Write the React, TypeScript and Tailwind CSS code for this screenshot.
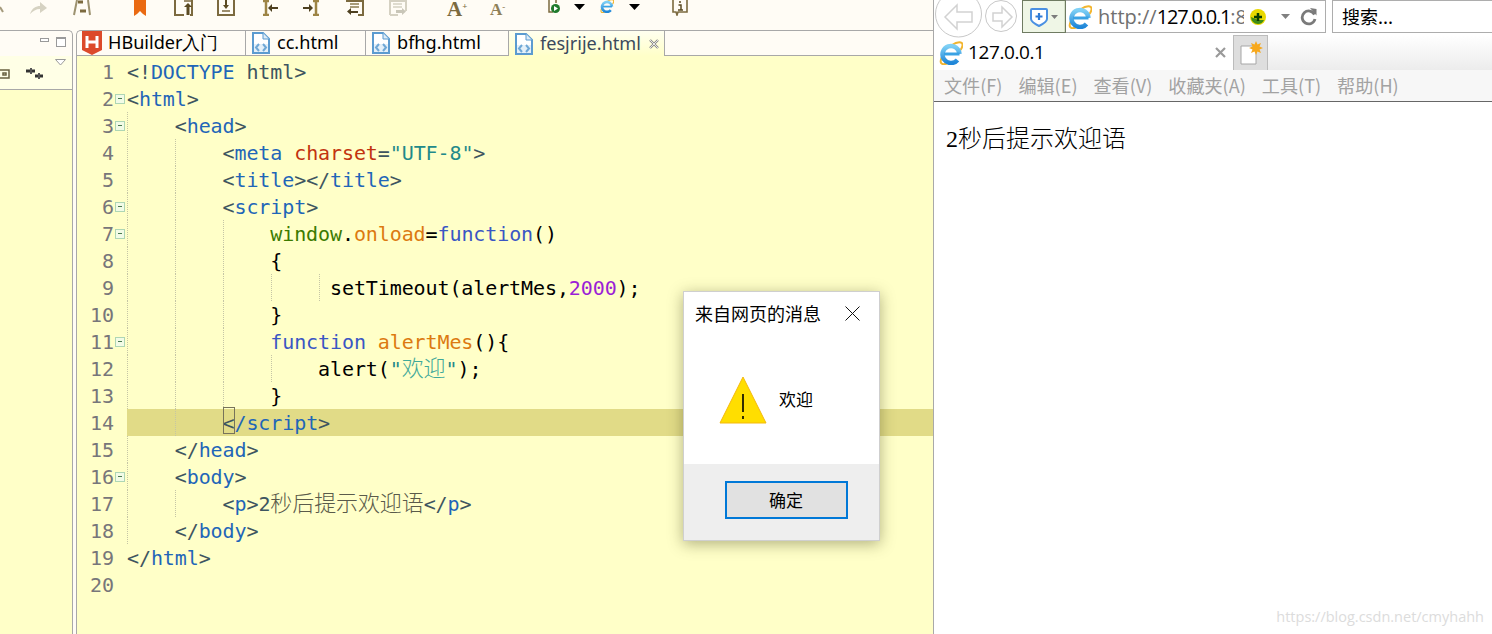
import type { ReactNode } from 'react';

const UI = '"Open Sans", "Noto Sans CJK SC", sans-serif';

function IeIcon({ size }: { size: number }) {
  return (
    <svg width={size} height={size} viewBox="0 0 24 24" className="shrink-0">
      <defs>
        <linearGradient id="ie-blue" x1="0" y1="0" x2="0" y2="1">
          <stop offset="0" stopColor="#7fd0f5" />
          <stop offset="1" stopColor="#1f86d8" />
        </linearGradient>
      </defs>
      <path d="M3 16C-.5 23 3.500 24.500 9 22" fill="none" stroke="#f2b52e" strokeWidth="2" />
      <path d="M13 4C18 .5 24 0 23.500 4.500 23.300 6 22.500 7.500 21.500 9" fill="none" stroke="#f2b52e" strokeWidth="2" />
      <path d="M20.500 13A8.500 8.500 0 1 0 18.500 19" fill="none" stroke="url(#ie-blue)" strokeWidth="4.500" />
      <path d="M5 13h15.500" stroke="#3aa2e4" strokeWidth="3" />
    </svg>
  );
}

function FileIcon() {
  return (
    <svg width="18" height="22" viewBox="0 0 18 22" className="shrink-0">
      <path d="M1 1h10l6 6v14H1z" fill="#fff" stroke="#5b9bd0" strokeWidth="2" />
      <path d="M11 1v6h6" fill="#dcebf7" stroke="#5b9bd0" />
      <path d="M2 12h14v8H2z" fill="#e4f0f9" />
      <path d="M7 12l-3 3.500L7 19M11 12l3 3.500L11 19" fill="none" stroke="#6fa8d6" strokeWidth="2" />
    </svg>
  );
}

function Tab({ icon, label, className }: { icon: ReactNode; label: string; className: string }) {
  return (
    <div className={`flex h-full items-center border-r border-b border-[#a8a8a8] text-[18.100px] text-black ${className}`}>
      {icon}
      <span>{label}</span>
    </div>
  );
}

function ToolBar() {
  const brown = '#7c6a3f';
  return (
    <div className="flex h-[30px] items-start bg-[#fffcf5]">
      <svg width="4" height="14" className="mt-[6px] shrink-0"><path d="M0 1l3 5" stroke="#a59a7c" strokeWidth="2" /></svg>
      <svg width="18" height="14" viewBox="0 0 18 14" className="ml-[26px] mt-[1px] shrink-0">
        <path d="M0 13C2 7 6 5 10 5V1l7 6-7 5V8C6 8 3 10 0 13z" fill="#d6d2c2" />
      </svg>
      <svg width="18" height="16" viewBox="0 0 18 16" className="ml-[25px] shrink-0">
        <path d="M4 0L1 15M15 0l2 15" stroke="#9d9270" strokeWidth="2" fill="none" />
        <path d="M5 2h5M7 11h6" stroke={brown} strokeWidth="3" />
      </svg>
      <svg width="12" height="16" viewBox="0 0 12 16" className="ml-[43px] shrink-0">
        <path d="M0 0h12v16l-3-2-3-3-3 3-3 2z" fill="#ea6a12" />
      </svg>
      <svg width="19" height="16" viewBox="0 0 19 16" className="ml-[28px] shrink-0">
        <path d="M1 0v15h9M18 0v15h-2" fill="none" stroke={brown} strokeWidth="2" />
        <path d="M14 3l-4 4h2.500v8h3V7H18z" fill="#5b4a22" />
        <path d="M10 1h7" stroke={brown} strokeWidth="1.500" />
      </svg>
      <svg width="18" height="16" viewBox="0 0 18 16" className="ml-[24px] shrink-0">
        <path d="M1 0v15h16V0" fill="none" stroke={brown} strokeWidth="2" />
        <path d="M6 5l3 4 3-4h-2V0H8v5z" fill="#5b4a22" />
        <path d="M5 11h8" stroke={brown} strokeWidth="1.500" />
      </svg>
      <svg width="16" height="16" viewBox="0 0 16 16" className="ml-[28px] shrink-0">
        <path d="M0 1h6M0 15h6M3 1v14" fill="none" stroke="#9d8445" strokeWidth="2.500" />
        <path d="M15 7H9V4L5 8l4 4V9h6z" fill="#4e4020" />
      </svg>
      <svg width="16" height="16" viewBox="0 0 16 16" className="ml-[24px] shrink-0">
        <path d="M10 1h6M10 15h6M13 1v14" fill="none" stroke="#9d8445" strokeWidth="2.500" />
        <path d="M0 7h6V4l4 4-4 4V9H0z" fill="#4e4020" />
      </svg>
      <svg width="18" height="16" viewBox="0 0 18 16" className="ml-[27px] shrink-0">
        <path d="M0 1h17v14h-5" fill="none" stroke={brown} strokeWidth="2" />
        <path d="M4 4h9M4 7h9" stroke="#8c7c52" strokeWidth="1.500" />
        <path d="M12 11H5V8l-4 3.500L5 15v-2h7z" fill="#4e4020" />
      </svg>
      <svg width="18" height="16" viewBox="0 0 18 16" className="ml-[25px] shrink-0">
        <path d="M1 15V1h16v10M1 15h8" fill="none" stroke="#d5d1c2" strokeWidth="2" />
        <path d="M4 4h9M4 7h9" stroke="#d5d1c2" strokeWidth="1.500" />
        <path d="M7 10h6V8l4 3.500L13 15v-2H7z" fill="#c9c6b8" />
      </svg>
      <div className="ml-[40px] flex w-[20px] shrink-0 items-start font-bold text-[#7c6a3f]" style={{ fontFamily: '"Liberation Serif", serif' }}>
        <span className="text-[21px] leading-[19px]">A</span>
        <span className="text-[9px] leading-[12px]">+</span>
      </div>
      <div className="ml-[23px] flex w-[15px] shrink-0 items-start font-bold text-[#8f8058]" style={{ fontFamily: '"Liberation Serif", serif' }}>
        <span className="text-[17px] leading-[19px]">A</span>
        <span className="text-[9px] leading-[14px]">-</span>
      </div>
      <svg width="12" height="14" viewBox="0 0 12 14" className="ml-[43px] shrink-0">
        <path d="M1 0v12h4M8 0v3" fill="none" stroke={brown} strokeWidth="1.500" />
        <circle cx="7.500" cy="8.500" r="4.500" fill="#1f7a2c" />
        <path d="M6 6l4 2.500L6 11z" fill="#fff" />
      </svg>
      <svg width="11" height="6" className="ml-[14px] mt-[4px] shrink-0"><path d="M0 0h11L5.500 6z" fill="#000" /></svg>
      <div className="ml-[15px] -mt-[1px] shrink-0"><IeIcon size={14} /></div>
      <svg width="11" height="6" className="ml-[15px] mt-[4px] shrink-0"><path d="M0 0h11L5.500 6z" fill="#000" /></svg>
      <svg width="16" height="16" viewBox="0 0 16 16" className="ml-[32px] shrink-0">
        <path d="M1 0v12h3l1 3 1-3h9V0" fill="none" stroke={brown} strokeWidth="1.600" />
        <path d="M7 2h2M6.500 5H9v5M6 10h5" fill="none" stroke="#5b4a22" strokeWidth="1.500" />
      </svg>
    </div>
  );
}

const dk = 'text-[#3e5560]';
const tag = 'text-[#1f66b8]';
const cjk = 'text-[22px] leading-none font-light';

type Line = { fold?: boolean; guides: string[]; hl?: boolean; code: ReactNode };

const g127 = 'left-0';
const g175 = 'left-[48px]';
const g223 = 'left-[96px]';
const g271 = 'left-[144px]';
const g319 = 'left-[192px]';

const lines: Line[] = [
  { guides: [], code: <><span className={dk}>{'<!'}</span><span className={tag}>DOCTYPE</span><span className={dk}> html{'>'}</span></> },
  { fold: true, guides: [], code: <><span className={dk}>{'<'}</span><span className={tag}>html</span><span className={dk}>{'>'}</span></> },
  { fold: true, guides: [g127], code: <>{'    '}<span className={dk}>{'<'}</span><span className={tag}>head</span><span className={dk}>{'>'}</span></> },
  { guides: [g127, g175], code: <>{'        '}<span className={dk}>{'<'}</span><span className={tag}>meta</span> <span className="text-[#c2330f]">charset</span><span className={dk}>=</span><span className="text-[#1f8a8a]">"UTF-8"</span><span className={dk}>{'>'}</span></> },
  { guides: [g127, g175], code: <>{'        '}<span className={dk}>{'<'}</span><span className={tag}>title</span><span className={dk}>{'></'}</span><span className={tag}>title</span><span className={dk}>{'>'}</span></> },
  { fold: true, guides: [g127, g175], code: <>{'        '}<span className={dk}>{'<'}</span><span className={tag}>script</span><span className={dk}>{'>'}</span></> },
  { fold: true, guides: [g127, g175, g223], code: <>{'            '}<span className="text-[#3b7a00]">window</span><span className="text-black">.</span><span className="text-[#dc7a10]">onload</span><span className="text-black">=</span><span className="text-[#3a56c4]">function</span><span className="text-black">()</span></> },
  { guides: [g127, g175, g223], code: <>{'            '}<span className="text-black">{'{'}</span></> },
  { guides: [g127, g175, g223, g271, g319], code: <>{'                 '}<span className="text-black">setTimeout(alertMes,</span><span className="text-[#9b1fd6]">2000</span><span className="text-black">);</span></> },
  { guides: [g127, g175, g223], code: <>{'            '}<span className="text-black">{'}'}</span></> },
  { fold: true, guides: [g127, g175, g223], code: <>{'            '}<span className="text-[#3a56c4]">function</span> <span className="text-[#dc7a10]">alertMes</span><span className="text-black">(){'{'}</span></> },
  { guides: [g127, g175, g223, g271], code: <>{'                '}<span className="text-black">alert(</span><span className="text-[#1f8a8a]">"</span><span className={`${cjk} text-[#3fa99a]`}>欢迎</span><span className="text-[#1f8a8a]">"</span><span className="text-black">);</span></> },
  { guides: [g127, g175, g223], code: <>{'            '}<span className="text-black">{'}'}</span></> },
  { hl: true, guides: [g175], code: <>{'        '}<span className={`relative ${dk}`}>{'<'}<span className="absolute top-[-4px] left-0 h-[27px] w-[12px] border border-[#77735a]" /></span><span className={tag}>/script</span><span className={dk}>{'>'}</span></> },
  { guides: [g127], code: <>{'    '}<span className={dk}>{'</'}</span><span className={tag}>head</span><span className={dk}>{'>'}</span></> },
  { fold: true, guides: [g127], code: <>{'    '}<span className={dk}>{'<'}</span><span className={tag}>body</span><span className={dk}>{'>'}</span></> },
  { guides: [g127, g175], code: <>{'        '}<span className={dk}>{'<'}</span><span className={tag}>p</span><span className={dk}>{'>2'}</span><span className={`${cjk} text-[#5a5a4a]`}>秒后提示欢迎语</span><span className={dk}>{'</'}</span><span className={tag}>p</span><span className={dk}>{'>'}</span></> },
  { guides: [g127], code: <>{'    '}<span className={dk}>{'</'}</span><span className={tag}>body</span><span className={dk}>{'>'}</span></> },
  { guides: [], code: <><span className={dk}>{'</'}</span><span className={tag}>html</span><span className={dk}>{'>'}</span></> },
  { guides: [], code: null },
];

function Editor() {
  return (
    <div className="flex-1 overflow-hidden bg-[#ffffc8] pt-[2px]" style={{ fontFamily: '"DejaVu Sans Mono", "Noto Sans CJK SC", monospace' }}>
      {lines.map((line, i) => (
        <div key={i} className="flex h-[27px] items-center text-[20px] leading-[27px]">
          <span className="relative top-[1px] w-[37px] shrink-0 text-right text-[#77767a]">{i + 1}</span>
          <span className="flex w-[13px] shrink-0 pl-[1px]">
            {line.fold && (
              <span className="flex h-[10px] w-[10px] items-center justify-center border border-[#aed6b4] bg-[#f2fbe6]">
                <span className="h-[1px] w-[4px] bg-[#4a7a50]" />
              </span>
            )}
          </span>
          <div className={`relative h-full flex-1 whitespace-pre tracking-[-0.1px] ${line.hl ? 'bg-[#e1db87]' : ''}`}>
            {line.guides.map((g) => (
              <span key={g} className={`absolute top-0 h-full border-l border-dotted border-[#c5c5a5] ${g}`} />
            ))}
            <span className="relative top-[1px]">{line.code}</span>
          </div>
        </div>
      ))}
    </div>
  );
}

function Dialog() {
  return (
    <div className="absolute top-[291px] left-[683px] flex h-[250px] w-[197px] flex-col border border-[#cfcfcf] bg-white shadow-[0_3px_14px_rgba(60,60,20,0.4)]" style={{ fontFamily: '"Noto Sans CJK SC", sans-serif' }}>
      <div className="flex items-center justify-between pt-[8px] pr-[19px] pl-[11px] text-[18px] leading-[26px] text-black">
        <span>来自网页的消息</span>
        <svg width="15" height="15" viewBox="0 0 15 15"><path d="M.5.5l14 14M14.500.5l-14 14" stroke="#111" fill="none" /></svg>
      </div>
      <div className="flex flex-1 items-center gap-[12px] pt-[10px] pl-[35px] text-[17px] text-black">
        <svg width="48" height="48" viewBox="0 0 48 48">
          <path d="M24 1L47 47H1z" fill="#ffde00" stroke="#f4b90c" />
          <path d="M24 18v18M24 40v3" stroke="#000" strokeWidth="1.600" />
        </svg>
        <span className="pb-[2px]">欢迎</span>
      </div>
      <div className="flex h-[76px] justify-start bg-[#eeeeee] pt-[17px] pl-[41px]">
        <div className="flex h-[38px] w-[123px] items-center justify-center border-2 border-[#0078d7] bg-[#e1e1e1] pr-[1px] text-[17px] text-black">确定</div>
      </div>
    </div>
  );
}

function Browser() {
  return (
    <div className="relative flex w-[559px] shrink-0 flex-col border-l border-[#a9a9a9] bg-white" style={{ fontFamily: UI }}>
      <div className="flex h-[35px] shrink-0 items-start bg-white pl-[1px]">
        <svg width="47" height="38" viewBox="0 0 47 38" className="z-10 shrink-0 overflow-visible">
          <circle cx="23.500" cy="14" r="23" fill="#fff" stroke="#c8c8c8" />
          <path d="M22 5L10 17l12 12v-7h15V12H22z" fill="#fff" stroke="#d2d2d2" strokeWidth="1.500" />
        </svg>
        <svg width="32" height="32" viewBox="0 0 32 32" className="ml-[3px] shrink-0">
          <circle cx="16" cy="16" r="15.500" fill="#fff" stroke="#c8c8c8" />
          <path d="M17 7l10 10-10 10v-6H8v-8h9z" fill="#fff" stroke="#d2d2d2" strokeWidth="1.500" />
        </svg>
        <div className="ml-[5px] flex h-[33px] w-[304px] shrink-0 items-center border border-[#adadad]">
          <div className="flex h-full w-[42px] shrink-0 items-center gap-[3px] border-r border-[#d5dfc8] bg-[#eff6e6] pl-[7px] outline outline-[#6f7b62]">
            <svg width="18" height="20" viewBox="0 0 18 20">
              <path d="M2 2h14a1 1 0 011 1v9c0 3-4 5-8 7-4-2-8-4-8-7V3a1 1 0 011-1z" fill="#fff" stroke="#4a90e2" strokeWidth="2" />
              <path d="M9 6v7M5.500 9.500h7" stroke="#2f7bd6" strokeWidth="2.200" />
            </svg>
            <svg width="7" height="4"><path d="M0 0h7L3.500 4z" fill="#7c7c7c" /></svg>
          </div>
          <div className="ml-[3px]"><IeIcon size={24} /></div>
          <div className="ml-[6px] w-[146px] shrink-0 overflow-hidden text-[20px] leading-[28px] whitespace-nowrap text-black">
            <span className="text-[#707070]">http://</span><span className="tracking-[-1.200px]">127.0.0.1</span><span className="text-[#707070]">:8080</span>
          </div>
          <svg width="16" height="16" viewBox="0 0 16 16" className="ml-[6px] shrink-0">
            <circle cx="8" cy="8" r="8" fill="#e9d800" />
            <path d="M1 8a7 7 0 007 7 7 7 0 006-4H8z" fill="#3f8d16" />
            <path d="M8 4v8M4 8h8" stroke="#0b3d00" strokeWidth="2.500" />
          </svg>
          <svg width="9" height="5" className="ml-[15px] shrink-0"><path d="M0 0h9L4.500 5z" fill="#808080" /></svg>
          <svg width="18" height="18" viewBox="0 0 18 18" className="ml-[10px] shrink-0">
            <path d="M14.500 6.500A6.500 6.500 0 1 0 15 11" fill="none" stroke="#7a7a7a" strokeWidth="2.800" />
            <path d="M10 0l6.500 1v6.500z" fill="#7a7a7a" />
          </svg>
        </div>
        <div className="ml-[6px] flex h-[33px] flex-1 items-center border-y border-l border-[#adadad] pl-[9px] text-[18px] text-black" style={{ fontFamily: '"Noto Sans CJK SC", sans-serif' }}>
          搜索...
        </div>
      </div>
      <div className="flex h-[35px] shrink-0 bg-[linear-gradient(#ffffff,#ececec)]">
        <div className="flex w-[299px] shrink-0 items-center bg-white pl-[5px] text-[19px] tracking-[-0.400px] text-black">
          <IeIcon size={24} />
          <span className="ml-[5px]">127.0.0.1</span>
          <svg width="11" height="11" viewBox="0 0 11 11" className="mr-[7px] ml-auto shrink-0">
            <path d="M1 1l9 9M10 1l-9 9" stroke="#9a9a9a" strokeWidth="2.200" />
          </svg>
        </div>
        <div className="flex w-[35px] shrink-0 items-center justify-center border-x border-t border-[#bcbcbc] bg-[#dedede]">
          <svg width="26" height="26" viewBox="0 0 26 26">
            <path d="M3 6h15v18H3z" fill="#fff" stroke="#a6a6a6" />
            <path d="M18 1l1.500 3.500L23 3l-1.500 3.500L25 8l-3.500 1.500L23 13l-3.500-1.500L18 15l-1.500-3.500L13 13l1.500-3.500L11 8l3.500-1.500L13 3l3.500 1.500z" fill="#f7a81b" />
          </svg>
        </div>
      </div>
      <div className="flex h-[32px] shrink-0 items-center gap-[16px] border-b border-[#666666] bg-[#f7f7f7] pl-[10px] text-[18.100px] text-[#a2a2a2]" style={{ fontFamily: '"Noto Sans CJK SC", sans-serif' }}>
        {['文件(F)', '编辑(E)', '查看(V)', '收藏夹(A)', '工具(T)', '帮助(H)'].map((m) => (
          <span key={m}>{m}</span>
        ))}
      </div>
      <p className="mt-[21px] ml-[12px] text-[24px] leading-[32px] font-light text-black" style={{ fontFamily: '"Liberation Serif", "Noto Sans CJK SC", serif' }}>
        2秒后提示欢迎语
      </p>
      <span className="absolute right-[8px] bottom-[8px] text-[14.500px] leading-[18px] text-[#dcdcdc]">https://blog.csdn.net/cmyhahh</span>
    </div>
  );
}

export default function App() {
  return (
    <div className="relative flex h-[634px] w-[1492px] overflow-hidden bg-white">
      <div className="flex w-[933px] shrink-0 flex-col bg-[#fffcf5]">
        <ToolBar />
        <div className="flex min-h-0 flex-1">
          {/* Left panel */}
          <div className="flex w-[73px] shrink-0 flex-col rounded-tr-[5px] border-t border-r border-[#a8a8a8]">
            <div className="flex h-[25px] shrink-0 items-start justify-end gap-[7px] pt-[6px] pr-[6px]">
              <span className="mt-[1px] h-[4px] w-[9px] border border-[#9a9a9a] bg-white" />
              <span className="h-[10px] w-[10px] border border-[#9a9a9a] border-t-2 bg-white" />
            </div>
            <div className="relative flex h-[34px] shrink-0 items-center border-b border-[#a8a8a8] bg-[#ffffe6] pr-[3px]">
              <svg width="10" height="10" className="mt-[3px] shrink-0"><path d="M0 1h9v8H0M3 4h3v2H3z" fill="none" stroke="#6a6240" strokeWidth="1.500" /></svg>
              <svg width="18" height="12" viewBox="0 0 18 12" className="mt-[2px] ml-[16px] shrink-0">
                <path d="M0 3h9M9 8h8" stroke="#333" strokeWidth="3" />
                <path d="M5 0v6M13 5v6" stroke="#555" strokeWidth="2" />
              </svg>
              <svg width="11" height="7" className="absolute top-[3px] right-[6px]"><path d="M.5.5h10L5.500 6z" fill="#fff" stroke="#9a9a9a" /></svg>
            </div>
            <div className="flex-1 bg-[#ffffc8]" />
          </div>
          {/* Editor column */}
          <div className="flex min-w-0 flex-1 flex-col pl-[3px]">
            <div className="flex h-[26px] shrink-0 rounded-tl-[5px] border-t border-l border-[#a8a8a8]">
              <Tab className="w-[169px] gap-[6px] pl-[5px]" label="HBuilder入门" icon={
                <svg width="20" height="24" viewBox="0 0 20 24" className="shrink-0">
                  <path d="M0 0h20v19l-10 5-10-5z" fill="#dc4a2b" />
                  <path d="M5 5v12M15 5v12M5 11h10" stroke="#fff" strokeWidth="3" />
                </svg>
              } />
              <Tab className="w-[120px] gap-[7px] pl-[6px]" label="cc.html" icon={<FileIcon />} />
              <Tab className="w-[143px] gap-[7px] pl-[6px]" label="bfhg.html" icon={<FileIcon />} />
              <div className="flex h-full w-[156px] items-center gap-[7px] border-r border-[#a8a8a8] bg-[linear-gradient(#fffff0,#ffffc8)] pl-[6px] text-[18.100px] text-[#3b4a5c]">
                <FileIcon />
                <span>fesjrije.html</span>
                <svg width="10" height="10" viewBox="0 0 10 10" className="ml-[1px] shrink-0">
                  <path d="M1 1l8 8M9 1L1 9" stroke="#8a8a8a" strokeWidth="2.400" />
                  <path d="M1 1l8 8M9 1L1 9" stroke="#fff" strokeWidth="0.800" />
                </svg>
              </div>
              <div className="flex-1 border-b border-[#a8a8a8]" />
            </div>
            <div className="flex min-h-0 flex-1 border-l border-[#a8a8a8]">
              <Editor />
            </div>
          </div>
        </div>
      </div>
      <Browser />
      <Dialog />
    </div>
  );
}
